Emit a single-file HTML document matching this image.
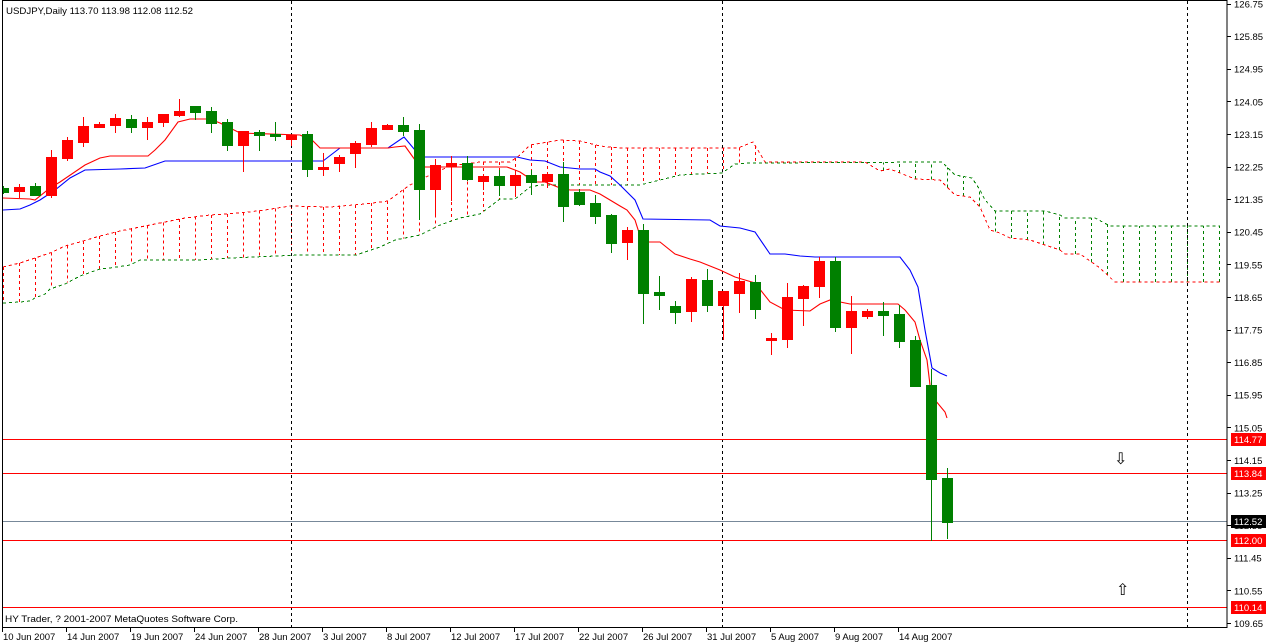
<!DOCTYPE html>
<html><head><meta charset="utf-8"><style>
html,body{margin:0;padding:0;background:#fff;}
svg{display:block;font-family:"Liberation Sans",sans-serif;font-size:9.5px;}
</style></head><body>
<svg id="s" width="1266" height="644" xmlns="http://www.w3.org/2000/svg" shape-rendering="crispEdges">
<rect x="0" y="0" width="1266" height="644" fill="#fff"/>
<g id="cloud"></g>
<g stroke="#000" stroke-dasharray="3,3" fill="none">
<line x1="291.5" y1="1" x2="291.5" y2="627"/>
<line x1="722.5" y1="1" x2="722.5" y2="627"/>
<line x1="1187.5" y1="1" x2="1187.5" y2="627"/>
</g>
<g stroke="#f00">
<line x1="3" y1="439.5" x2="1227" y2="439.5"/>
<line x1="3" y1="473.5" x2="1227" y2="473.5"/>
<line x1="3" y1="540.5" x2="1227" y2="540.5"/>
<line x1="3" y1="607.5" x2="1227" y2="607.5"/>
</g>
<line x1="3" y1="521.5" x2="1227" y2="521.5" stroke="#778899"/>
<g id="lines" fill="none" shape-rendering="auto"></g>
<g id="candles"></g>
<g fill="none" stroke="#000">
<rect x="2.5" y="0.5" width="1224.5" height="627"/>
</g>
<g id="axis"></g>
<text x="6" y="14" fill="#000" textLength="187" lengthAdjust="spacingAndGlyphs">USDJPY,Daily  113.70 113.98 112.08 112.52</text>
<text x="5" y="622" fill="#000" textLength="233" lengthAdjust="spacingAndGlyphs">HY Trader, ? 2001-2007 MetaQuotes Software Corp.</text>
<text x="1114" y="464" font-size="16" fill="#000">⇩</text>
<text x="1116" y="595" font-size="16" fill="#000">⇧</text>
</svg>
<script>
var NS="http://www.w3.org/2000/svg";
function el(t,a,p){var e=document.createElementNS(NS,t);for(var k in a)e.setAttribute(k,a[k]);if(p)p.appendChild(e);return e;}
var C=[
[0,'g',188,192,186,193],[1,'r',187,191,184,197],[2,'g',186,195,183,195],[3,'r',157,195,150,197],
[4,'r',140,158,137,160],[5,'r',126,142,117,146],[6,'r',124,127,122,127],[7,'r',118,125,114,132],
[8,'g',119,127,115,132],[9,'r',122,127,117,139],[10,'r',114,122,114,126],[11,'r',111,115,99,116],
[12,'g',106,112,106,119],[13,'g',111,123,107,132],[14,'g',122,145,119,150],[15,'r',131,145,131,171],
[16,'g',132,135,130,150],[17,'g',134,136,122,140],[18,'r',135,139,135,145],[19,'g',134,169,131,176],
[20,'r',167,169,153,175],[21,'r',157,163,155,171],[22,'r',143,153,141,167],[23,'r',128,144,122,146],
[24,'r',125,129,124,129],[25,'g',125,131,117,135],[26,'g',130,189,124,219],[27,'r',165,189,159,216],
[28,'r',163,166,156,200],[29,'g',163,179,156,180],[30,'r',176,181,176,189],[31,'g',176,185,170,195],
[32,'r',175,185,171,195],[33,'g',175,182,170,194],[34,'r',174,181,172,187],[35,'g',174,206,162,221],
[36,'g',192,204,189,205],[37,'g',203,216,195,223],[38,'g',215,243,214,252],[39,'r',230,242,227,259],
[40,'g',230,293,224,323],[41,'g',292,295,276,309],[42,'g',306,312,301,323],[43,'r',279,311,277,321],
[44,'g',280,305,269,311],[45,'r',291,305,291,339],[46,'r',281,293,273,312],[47,'g',282,309,275,318],
[48,'r',338,340,333,354],[49,'r',297,339,283,347],[50,'r',286,298,285,325],[51,'r',261,286,257,297],
[52,'g',261,327,257,331],[53,'r',311,327,296,353],[54,'r',311,316,309,318],[55,'g',311,315,302,335],
[56,'g',314,341,305,347],[57,'g',340,386,336,386],[58,'g',385,479,369,540],[59,'g',478,522,468,538]];
var cg=document.getElementById('candles');
C.forEach(function(c){var x=3+16*c[0];var col=c[1]=='g'?'#008000':'#f00';
el('rect',{x:x,y:c[4],width:1,height:c[5]-c[4]+1,fill:col},cg);
var l=x-5,w=11;if(l<3){w-=3-l;l=3;}
el('rect',{x:l,y:c[2],width:w,height:Math.max(2,c[3]-c[2]+1),fill:col},cg);});
var red=[[3,198],[30,199],[35,200],[50,188],[60,182],[85,165],[100,158],[110,156],[148,156],[155,150],[165,140],[178,122],[190,119],[210,119],[220,123],[240,133],[300,135],[313,141],[320,148],[388,148],[395,147],[405,146],[415,160],[425,167],[507,167],[515,170],[520,172],[535,182],[545,182],[560,188],[570,190],[590,190],[600,194],[610,200],[620,206],[627,210],[635,220],[642,242],[660,242],[675,254],[690,259],[700,262],[720,270],[735,277],[745,280],[755,283],[770,302],[785,310],[810,311],[820,304],[830,300],[850,304],[898,304],[905,310],[915,322],[920,340],[927,360],[930,385],[935,400],[945,412],[947,418]];
var blue=[[3,210],[20,209],[30,205],[40,200],[55,190],[70,178],[85,170],[120,169],[145,168],[165,161],[323,161],[340,148],[388,148],[404,137],[420,156],[425,157],[517,157],[530,160],[545,161],[560,167],[580,169],[595,169],[600,172],[610,176],[620,185],[635,200],[643,219],[710,220],[720,226],[740,228],[755,232],[770,254],[785,254],[800,256],[815,257],[900,257],[910,270],[918,287],[925,330],[932,368],[940,373],[947,376]];
var SA=[[3,267],[20,263],[35,258],[50,253],[65,246],[80,242],[100,236],[120,231],[145,226],[165,222],[185,218],[210,215],[240,213],[265,210],[290,206],[330,207],[365,204],[388,201],[400,192],[410,185],[420,180],[430,175],[450,166],[480,162],[510,162],[520,155],[530,145],[560,140],[580,141],[600,146],[620,148],[738,148],[753,142],[765,162],[865,162],[875,168],[880,171],[890,169],[905,175],[915,179],[940,180],[945,185],[955,195],[970,197],[980,207],[990,230],[1000,233],[1010,238],[1030,240],[1045,245],[1060,250],[1065,254],[1080,254],[1100,268],[1115,282],[1220,282]];
var SB=[[3,303],[20,302],[30,301],[35,298],[45,294],[50,289],[65,284],[80,276],[100,269],[110,268],[130,265],[140,260],[200,260],[230,258],[300,255],[356,255],[380,247],[395,240],[420,235],[440,225],[460,218],[480,214],[500,199],[515,199],[530,187],[540,185],[640,185],[660,180],[680,175],[722,173],[735,164],[750,163],[942,162],[950,170],[955,175],[972,178],[980,190],[985,200],[995,211],[1045,211],[1060,215],[1065,218],[1095,218],[1110,226],[1220,226]];
function pts(a){return a.map(function(p){return p[0]+','+p[1];}).join(' ');}
function at(a,x){for(var i=1;i<a.length;i++){if(x<=a[i][0]){var t=(x-a[i-1][0])/(a[i][0]-a[i-1][0]||1);return a[i-1][1]+t*(a[i][1]-a[i-1][1]);}}return a[a.length-1][1];}
var lg=document.getElementById('lines');
var cl=document.getElementById('cloud');
for(var k=0;k<=76;k++){var x=3.5+16*k;var a=at(SA,x),b=at(SB,x);
el('line',{x1:x,y1:a,x2:x,y2:b,stroke:a<b?'#f00':'#008000','stroke-dasharray':'3,3'},cl);}
el('polyline',{points:pts(SA),stroke:'#f00','stroke-dasharray':'3,3',fill:'none'},cl);
el('polyline',{points:pts(SB),stroke:'#008000','stroke-dasharray':'3,3',fill:'none'},cl);
el('polyline',{points:pts(blue),stroke:'#00f','stroke-width':1.1},lg);
el('polyline',{points:pts(red),stroke:'#f00','stroke-width':1.1},lg);
var ax=document.getElementById('axis');
var labs=['126.75','125.85','124.95','124.05','123.15','122.25','121.35','120.45','119.55','118.65','117.75','116.85','115.95','115.05','114.15','113.25','112.35','111.45','110.55','109.65'];
labs.forEach(function(s,i){var y=3.5+i*32.6;
el('line',{x1:1227,y1:Math.round(y)+0.5,x2:1231,y2:Math.round(y)+0.5,stroke:'#000'},ax);
var t=el('text',{x:1234,y:y+4,fill:'#000'},ax);t.textContent=s;});
[[439,'114.77','#f00'],[473,'113.84','#f00'],[521,'112.52','#000'],[540,'112.00','#f00'],[607,'110.14','#f00']].forEach(function(r){
el('rect',{x:1231,y:r[0]-6,width:35,height:13,fill:r[2]},ax);
var t=el('text',{x:1234,y:r[0]+4,fill:'#fff'},ax);t.textContent=r[1];});
var dates=['10 Jun 2007','14 Jun 2007','19 Jun 2007','24 Jun 2007','28 Jun 2007','3 Jul 2007','8 Jul 2007','12 Jul 2007','17 Jul 2007','22 Jul 2007','26 Jul 2007','31 Jul 2007','5 Aug 2007','9 Aug 2007','14 Aug 2007'];
dates.forEach(function(d,i){var x=2+64*i;
el('line',{x1:x+0.5,y1:627,x2:x+0.5,y2:632,stroke:'#000'},ax);
var t=el('text',{x:x+1,y:640,fill:'#000'},ax);t.textContent=d;});
</script>
</body></html>
